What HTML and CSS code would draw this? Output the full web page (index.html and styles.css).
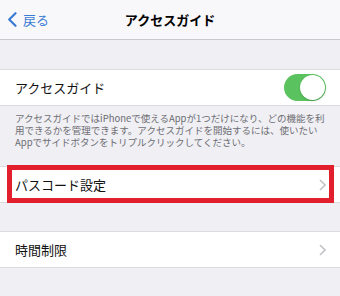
FILE: index.html
```html
<!DOCTYPE html>
<html lang="ja">
<head>
<meta charset="utf-8">
<link rel="stylesheet" href="styles.css">
</head>
<body>
<header class="nav">
  <div class="back">
    <svg class="back-icon" width="10" height="15" viewBox="0 0 10 15"><path d="M8.5 1.2 L2.2 7.5 L8.5 13.8" fill="none" stroke="#3a7bd5" stroke-width="2.2" stroke-linecap="round" stroke-linejoin="round"/></svg>
    <span>戻る</span>
  </div>
  <div class="title">アクセスガイド</div>
</header>

<section class="group first">
  <div class="row">
    <span class="label">アクセスガイド</span>
    <span class="toggle"><span class="knob"></span></span>
  </div>
</section>
<p class="note">アクセスガイドではiPhoneで使えるAppが1つだけになり、どの機能を利<br>用できるかを管理できます。アクセスガイドを開始するには、使いたい<br>Appでサイドボタンをトリプルクリックしてください。</p>

<section class="group second">
  <div class="row">
    <span class="label">パスコード設定</span>
    <svg class="chev" width="7" height="12" viewBox="0 0 7 12"><path d="M1 1 L6 6 L1 11" fill="none" stroke="#c4c4c8" stroke-width="1.6"/></svg>
    <span class="redbox"></span>
  </div>
</section>

<section class="group third">
  <div class="row">
    <span class="label">時間制限</span>
    <svg class="chev" width="7" height="12" viewBox="0 0 7 12"><path d="M1 1 L6 6 L1 11" fill="none" stroke="#c4c4c8" stroke-width="1.6"/></svg>
  </div>
</section>
</body>
</html>
```
FILE: styles.css
```css
html, body {
  margin: 0;
  padding: 0;
}
body {
  background: #efeff4;
  font-family: "Noto Sans CJK JP", "Noto Sans", sans-serif;
  width: 340px;
  height: 296px;
  overflow: hidden;
}
.nav {
  height: 39px;
  background: #f8f8fa;
  border-bottom: 1px solid #c9c9cd;
  display: flex;
  align-items: center;
  position: relative;
}
.back {
  display: flex;
  align-items: center;
  gap: 6px;
  padding-left: 7px;
  color: #3a7bd5;
  font-size: 13px;
}
.back-icon {
  display: block;
}
.title {
  position: absolute;
  left: 0;
  right: 0;
  text-align: center;
  font-weight: bold;
  font-size: 13px;
  color: #000;
  pointer-events: none;
}
.group {
  background: #fff;
  border-top: 1px solid #dcdce0;
  border-bottom: 1px solid #dcdce0;
}
.group.first {
  margin-top: 29px;
}
.group.second {
  margin-top: 18px;
}
.group.third {
  margin-top: 28px;
}
.row {
  height: 35px;
  display: flex;
  align-items: center;
  justify-content: space-between;
  padding: 0 14px 0 15px;
  position: relative;
}
.label {
  font-size: 13px;
  color: #111;
}
.toggle {
  width: 42px;
  height: 27px;
  border-radius: 14px;
  background: #5ac25e;
  position: relative;
}
.knob {
  position: absolute;
  right: 1px;
  top: 1px;
  width: 25px;
  height: 25px;
  border-radius: 50%;
  background: #fff;
  box-shadow: 0 1px 2px rgba(0,0,0,0.2);
}
.chev {
  display: block;
}
.note {
  margin: 0;
  padding: 6px 15px 0 15px;
  font-size: 9.5px;
  line-height: 12px;
  color: #6d6d72;
  white-space: nowrap;
}
.redbox {
  position: absolute;
  left: 7px;
  right: 6px;
  top: -2px;
  bottom: -1px;
  border: 5px solid #e21f2c;
  pointer-events: none;
}
```
